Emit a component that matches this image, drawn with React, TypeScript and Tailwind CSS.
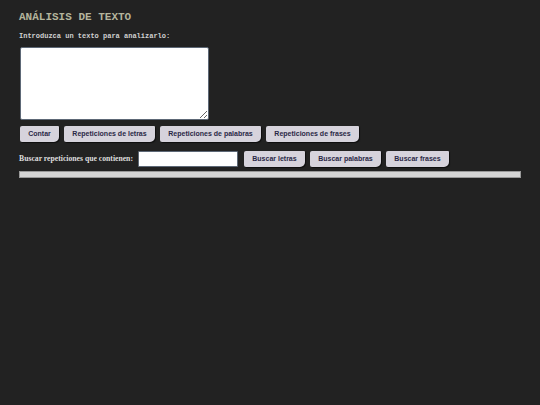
import React from "react";

const btn =
  "h-4 rounded-[2px_1px_5px_2px] bg-[#d6d3dc] px-2 text-[7px] font-bold leading-4 text-[#2a2846] shadow-[1px_1px_1px_rgba(0,0,0,0.6)] [font-family:'Liberation_Sans',Arial,sans-serif]";

export default function App() {
  return (
    <main className="min-h-[405px] w-full bg-[#222222] px-[19px] pt-[10px]">
      <h1 className="text-[11px] font-bold leading-[14px] tracking-normal text-[#b4b49c] [font-family:'Liberation_Mono','DejaVu_Sans_Mono',monospace]">
        ANÁLISIS DE TEXTO
      </h1>
      <p className="mt-[8px] text-[7px] font-bold leading-[9px] text-[#d0d0d0] [font-family:'Liberation_Mono','DejaVu_Sans_Mono',monospace]">
        Introduzca un texto para analizarlo:
      </p>
      <textarea className="mt-[6px] ml-px block h-[73px] w-[189px] rounded-[2px] border border-[#5d6876] bg-white" />
      <div className="mt-[6px] ml-px flex gap-[5px]">
        <button className={`${btn} w-[39px]`}>Contar</button>
        <button className={`${btn} w-[91px]`}>Repeticiones de letras</button>
        <button className={`${btn} w-[101px]`}>Repeticiones de palabras</button>
        <button className={`${btn} w-[93px]`}>Repeticiones de frases</button>
      </div>
      <div className="mt-[9px] flex items-center">
        <span className="text-[7.7px] font-bold text-[#dedede] [font-family:'Liberation_Serif','Times_New_Roman',serif]">
          Buscar repeticiones que contienen:
        </span>
        <input className="ml-[5px] h-4 w-[100px] rounded-[1px] border border-[#5d6876] bg-white" />
        <div className="ml-[6px] flex gap-[5px]">
          <button className={`${btn} w-[61px]`}>Buscar letras</button>
          <button className={`${btn} w-[71px]`}>Buscar palabras</button>
          <button className={`${btn} w-[63px]`}>Buscar frases</button>
        </div>
      </div>
      <div className="mt-[4px] h-[7px] w-[502px] border border-[#9a9a9a] bg-[#d6d6d6]" />
    </main>
  );
}
